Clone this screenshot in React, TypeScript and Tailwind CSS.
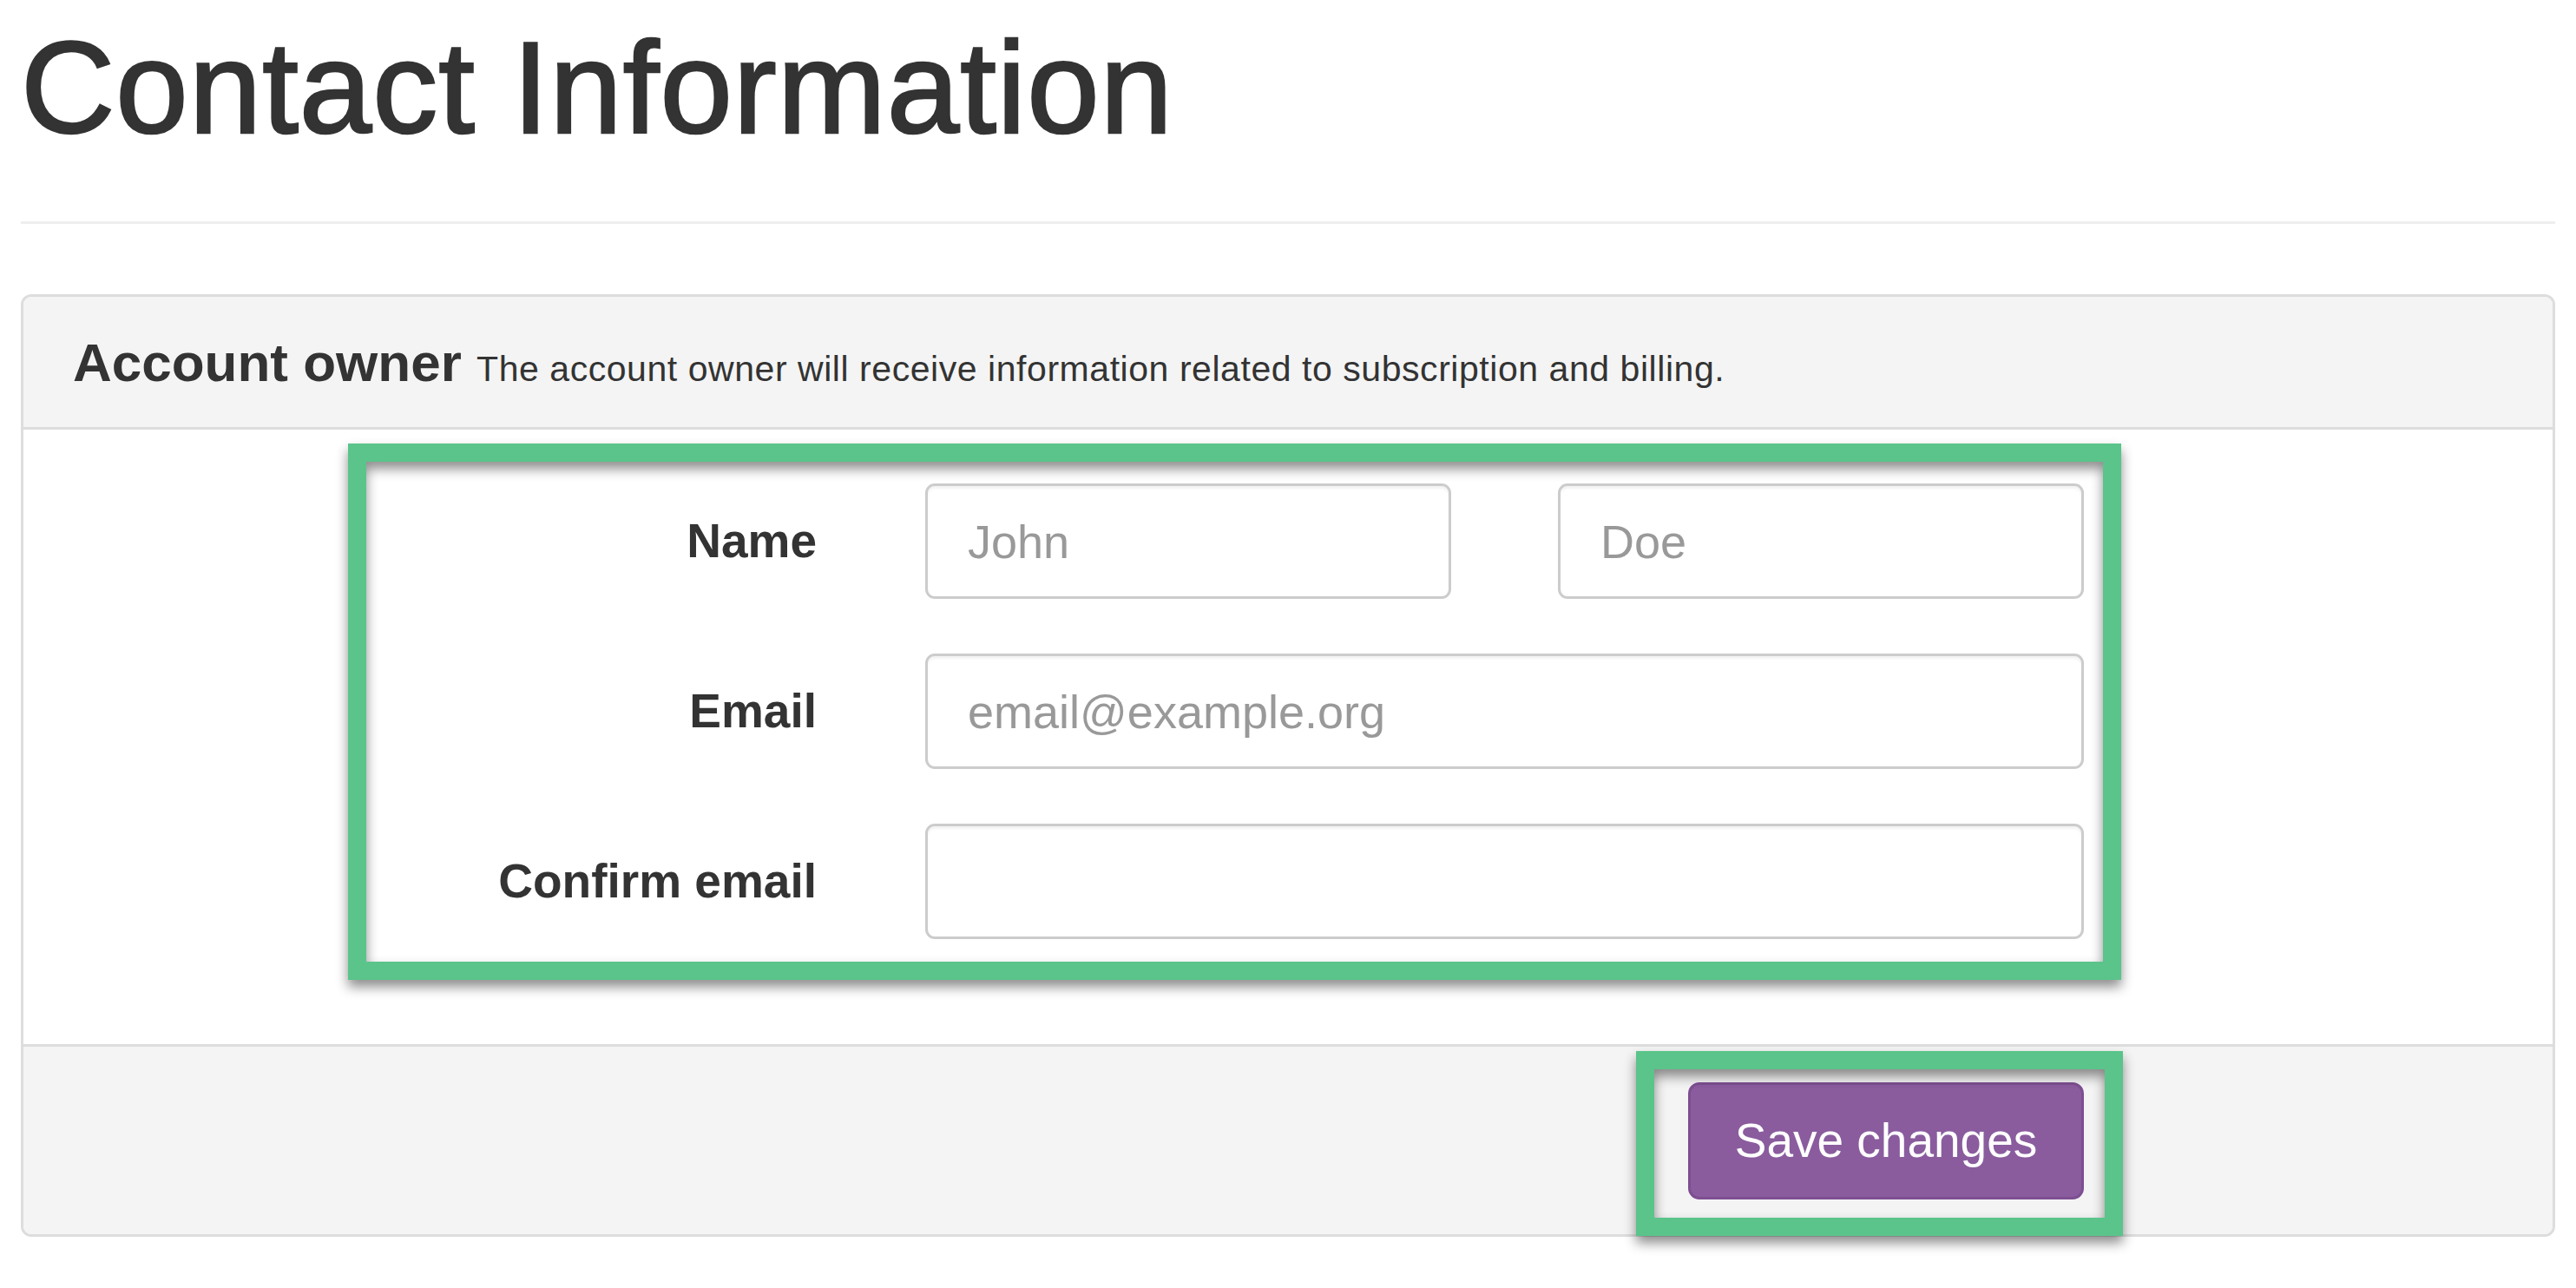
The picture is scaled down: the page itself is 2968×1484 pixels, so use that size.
import React from 'react';

const fields = [
  { label: 'Email', placeholder: 'email@example.org' },
  { label: 'Confirm email', placeholder: '' },
];

function Field({ placeholder }: { placeholder: string }) {
  return (
    <input
      type="text"
      placeholder={placeholder}
      className="h-[133px] w-full min-w-0 rounded-[11px] border-[3px] border-[#cccccc] bg-white pl-[46px] text-[54px] text-[#555] shadow-[inset_0_3px_3px_rgba(0,0,0,0.05)] outline-none placeholder:text-[#999]"
    />
  );
}

function Row({ label, children }: { label: string; children: React.ReactNode }) {
  return (
    <div className="flex items-center">
      <label className="w-[500px] shrink-0 text-right text-[55px] font-bold">{label}</label>
      <div className="ml-[125px] flex w-[1335px] gap-[123px]">{children}</div>
    </div>
  );
}

export default function App() {
  return (
    <div className="min-h-screen bg-white px-[24px] font-['Liberation_Sans',Arial,sans-serif] text-[#333]">
      <h1 className="pt-[19px] text-[150px] font-normal leading-[165px] tracking-[1px] [-webkit-text-stroke:2.5px_#333]">
        Contact Information
      </h1>
      <div className="mt-[71px] h-[3px] bg-[#eeeeee]" />

      <div className="mt-[81px] rounded-[12px] border-[3px] border-[#dddddd]">
        <div className="rounded-t-[9px] border-b-[3px] border-[#dddddd] bg-[#f4f4f4] pb-[40px] pl-[57px] pt-[42px] text-[62px] leading-[68px]">
          <span className="font-bold">Account owner</span>{' '}
          <span className="text-[41px] leading-none tracking-[0.55px]">
            The account owner will receive information related to subscription and billing.
          </span>
        </div>

        <div className="relative bg-white pb-[121px] pl-[414px] pt-[62px]">
          <div className="flex flex-col gap-[63px]">
            <Row label="Name">
              <Field placeholder="John" />
              <Field placeholder="Doe" />
            </Row>
            {fields.map((f) => (
              <Row key={f.label} label={f.label}>
                <Field placeholder={f.placeholder} />
              </Row>
            ))}
          </div>
          <div className="pointer-events-none absolute left-[374px] top-[16px] h-[618px] w-[2043px] border-[21px] border-[#5ac48a] [filter:drop-shadow(0_8px_7px_rgba(0,0,0,0.45))]" />
        </div>

        <div className="relative flex justify-end rounded-b-[9px] border-t-[3px] border-[#dddddd] bg-[#f4f4f4] pb-[40px] pr-[540px] pt-[41px]">
          <button
            type="button"
            className="h-[135px] w-[456px] rounded-[13px] border-[3px] border-[#7d4f91] bg-[#8a5c9e] text-[55px] text-white"
          >
            Save changes
          </button>
          <div className="pointer-events-none absolute left-[1858px] top-[5px] h-[213px] w-[561px] border-[21px] border-[#5ac48a] [filter:drop-shadow(0_8px_7px_rgba(0,0,0,0.45))]" />
        </div>
      </div>
    </div>
  );
}
